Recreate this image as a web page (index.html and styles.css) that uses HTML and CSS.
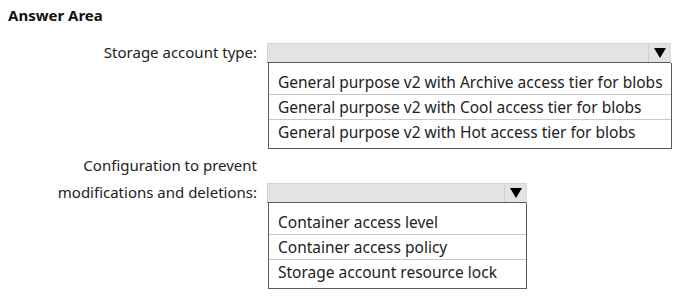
FILE: index.html
```html
<!DOCTYPE html>
<html lang="en">
<head>
<meta charset="UTF-8" />
<title>Answer Area</title>
<link rel="stylesheet" href="styles.css">
</head>
<body>
<h1>Answer Area</h1>

<div class="answer">
  <div class="label">Storage account type:</div>
  <div class="dropdown wide">
    <div class="select"><span class="arrow"></span></div>
    <ul class="options">
      <li>General purpose v2 with Archive access tier for blobs</li>
      <li>General purpose v2 with Cool access tier for blobs</li>
      <li>General purpose v2 with Hot access tier for blobs</li>
    </ul>
  </div>

  <div class="label label-top">Configuration to prevent</div>
  <div></div>

  <div class="label">modifications and deletions:</div>
  <div class="dropdown narrow">
    <div class="select"><span class="arrow"></span></div>
    <ul class="options">
      <li>Container access level</li>
      <li>Container access policy</li>
      <li>Storage account resource lock</li>
    </ul>
  </div>
</div>
</body>
</html>
```

FILE: styles.css
```css
body {
  font-family: "Noto Sans", "Open Sans", sans-serif;
  margin: 0;
  padding: 0 8px;
  color: #222;
  background: #fff;
}
h1 {
  font-size: 15px;
  font-weight: 700;
  margin: 0;
  padding-top: 4px;
  line-height: 22px;
  color: #111;
}
.answer {
  display: grid;
  grid-template-columns: 259px auto;
  align-items: start;
  margin-top: 17px;
  font-size: 15px;
}
.label {
  text-align: right;
  padding-right: 10px;
  height: 19px;
  line-height: 19px;
  white-space: nowrap;
}
.label-top {
  margin-top: 7px;
  height: 27px;
  line-height: 19px;
}
.dropdown.wide {
  width: 404px;
}
.dropdown.narrow {
  width: 260px;
}
.select {
  height: 18px;
  background: #e3e3e3;
  border: 1px solid #d4d4d4;
  border-bottom: 1px solid #5a5a5a;
  border-right-color: #d8d8d8;
  display: flex;
  justify-content: flex-end;
}
.arrow {
  width: 21px;
  border-left: 1px solid #cfcfcf;
  display: flex;
  align-items: center;
  justify-content: center;
}
.arrow::after {
  content: "";
  border-left: 6px solid transparent;
  border-right: 6px solid transparent;
  border-top: 10px solid #000;
}
.options {
  list-style: none;
  margin: 0 -1px 0 1px;
  padding: 7px 0 4px;
  border: 1px solid #5a5a5a;
  border-top: none;
  font-size: 15.5px;
}
.narrow .options {
  margin-right: 0;
}
.options li {
  height: 24px;
  line-height: 24px;
  padding-left: 9px;
  border-bottom: 1px solid #c8c8c8;
  white-space: nowrap;
}
.options li:last-child {
  border-bottom: none;
}
```
